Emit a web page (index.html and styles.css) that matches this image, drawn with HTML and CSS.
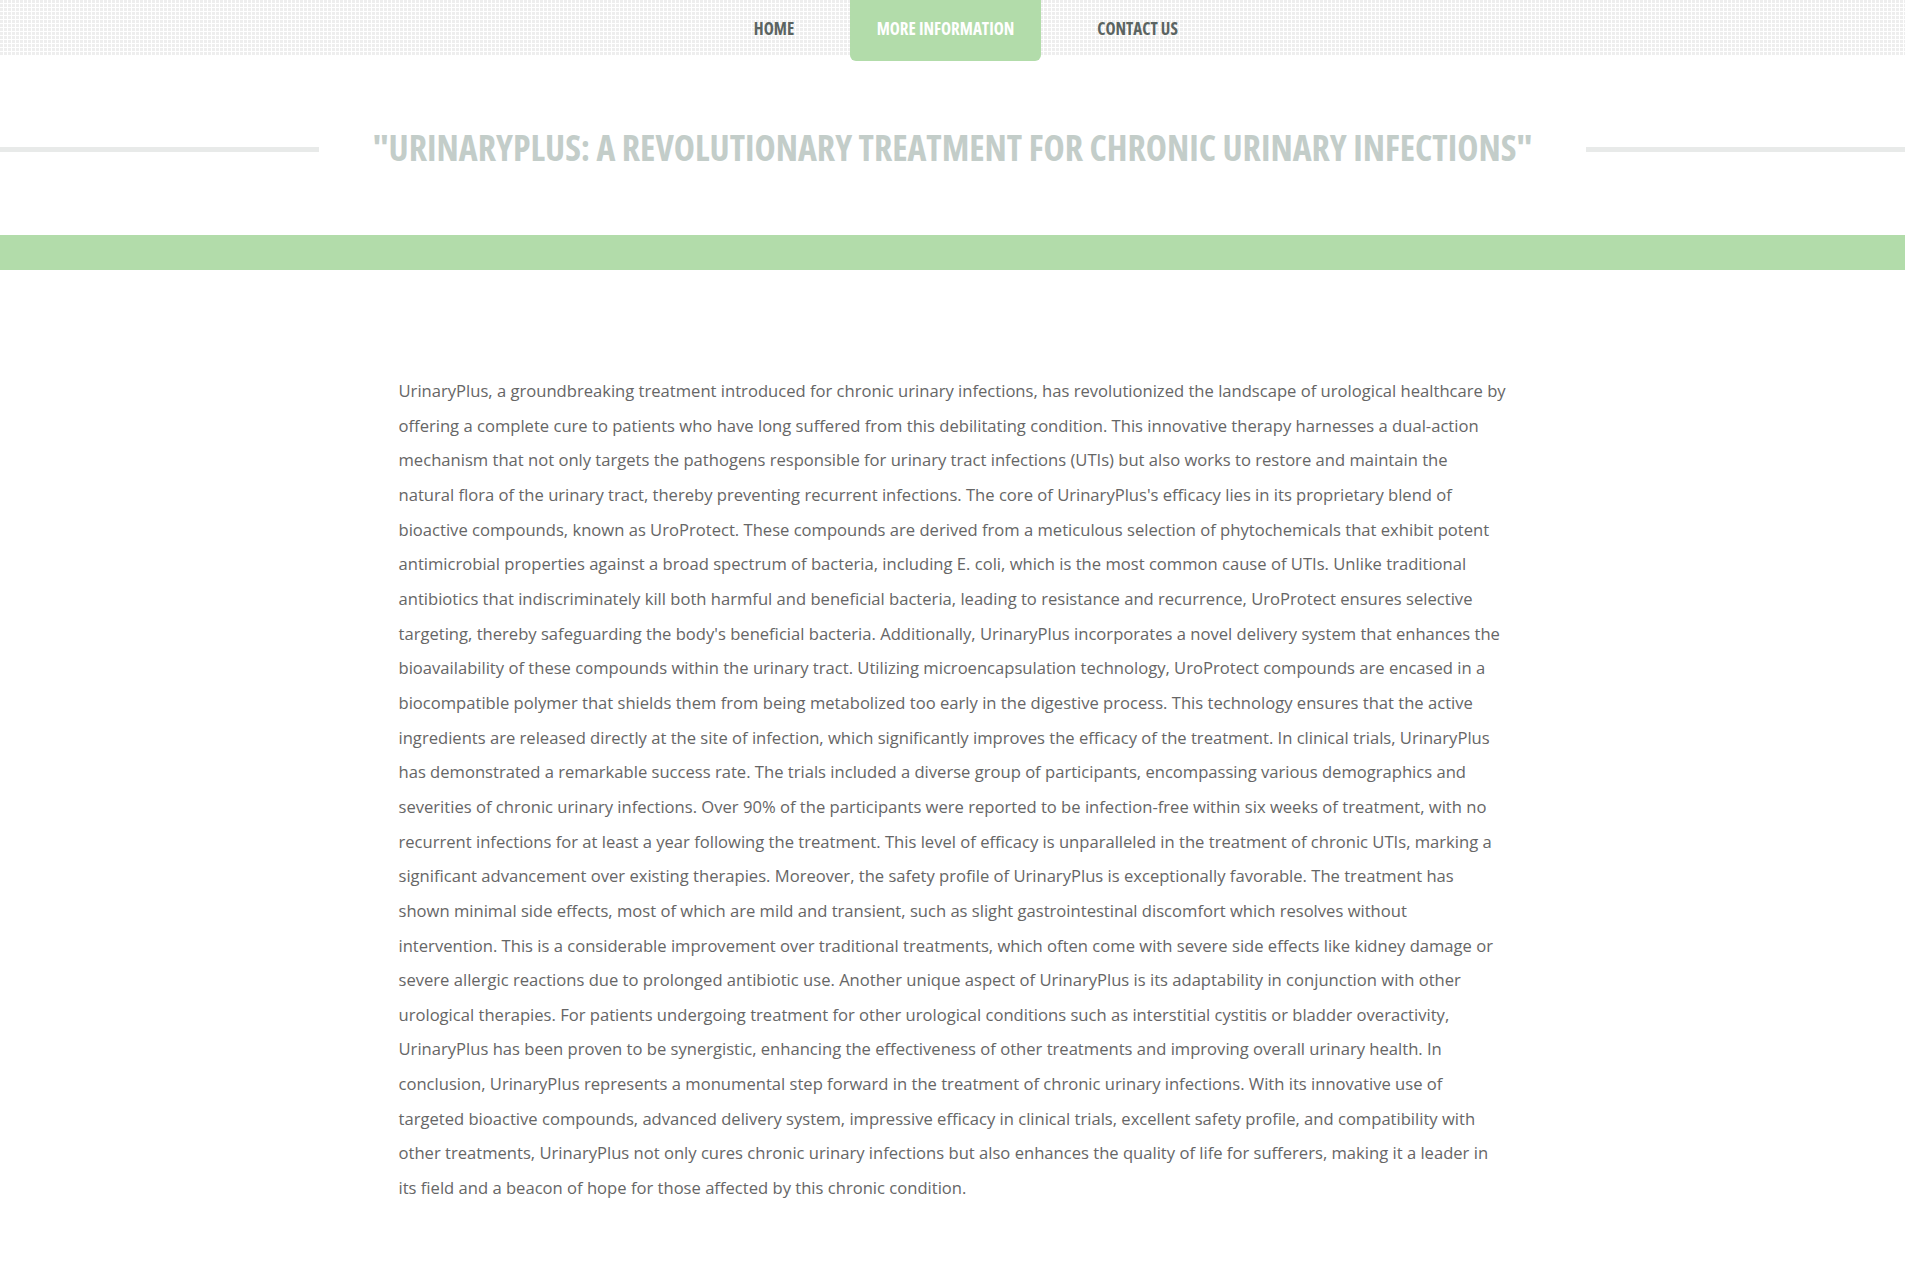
FILE: index.html
```html
<!DOCTYPE html>
<html lang="en">
<head>
<meta charset="utf-8">
<title>UrinaryPlus</title>
<link rel="stylesheet" href="styles.css">
</head>
<body>
<header class="topbar">
  <nav class="nav">
    <a class="nav-item nav-home" href="#">HOME</a>
    <a class="nav-item nav-more active" href="#">MORE INFORMATION</a>
    <a class="nav-item nav-contact" href="#">CONTACT US</a>
  </nav>
</header>
<section class="title-section">
  <div class="title-row">
    <span class="title-line"></span>
    <h1 class="title">"URINARYPLUS: A REVOLUTIONARY TREATMENT FOR CHRONIC URINARY INFECTIONS"</h1>
    <span class="title-line"></span>
  </div>
</section>
<div class="band"></div>
<main class="container">
  <p class="article">UrinaryPlus, a groundbreaking treatment introduced for chronic urinary infections, has revolutionized the landscape of urological healthcare by offering a complete cure to patients who have long suffered from this debilitating condition. This innovative therapy harnesses a dual-action mechanism that not only targets the pathogens responsible for urinary tract infections (UTIs) but also works to restore and maintain the natural flora of the urinary tract, thereby preventing recurrent infections. The core of UrinaryPlus's efficacy lies in its proprietary blend of bioactive compounds, known as UroProtect. These compounds are derived from a meticulous selection of phytochemicals that exhibit potent antimicrobial properties against a broad spectrum of bacteria, including E. coli, which is the most common cause of UTIs. Unlike traditional antibiotics that indiscriminately kill both harmful and beneficial bacteria, leading to resistance and recurrence, UroProtect ensures selective targeting, thereby safeguarding the body's beneficial bacteria. Additionally, UrinaryPlus incorporates a novel delivery system that enhances the bioavailability of these compounds within the urinary tract. Utilizing microencapsulation technology, UroProtect compounds are encased in a biocompatible polymer that shields them from being metabolized too early in the digestive process. This technology ensures that the active ingredients are released directly at the site of infection, which significantly improves the efficacy of the treatment. In clinical trials, UrinaryPlus has demonstrated a remarkable success rate. The trials included a diverse group of participants, encompassing various demographics and severities of chronic urinary infections. Over 90% of the participants were reported to be infection-free within six weeks of treatment, with no recurrent infections for at least a year following the treatment. This level of efficacy is unparalleled in the treatment of chronic UTIs, marking a significant advancement over existing therapies. Moreover, the safety profile of UrinaryPlus is exceptionally favorable. The treatment has shown minimal side effects, most of which are mild and transient, such as slight gastrointestinal discomfort which resolves without intervention. This is a considerable improvement over traditional treatments, which often come with severe side effects like kidney damage or severe allergic reactions due to prolonged antibiotic use. Another unique aspect of UrinaryPlus is its adaptability in conjunction with other urological therapies. For patients undergoing treatment for other urological conditions such as interstitial cystitis or bladder overactivity, UrinaryPlus has been proven to be synergistic, enhancing the effectiveness of other treatments and improving overall urinary health. In conclusion, UrinaryPlus represents a monumental step forward in the treatment of chronic urinary infections. With its innovative use of targeted bioactive compounds, advanced delivery system, impressive efficacy in clinical trials, excellent safety profile, and compatibility with other treatments, UrinaryPlus not only cures chronic urinary infections but also enhances the quality of life for sufferers, making it a leader in its field and a beacon of hope for those affected by this chronic condition.</p>
</main>
</body>
</html>
```

FILE: styles.css
```css
* { box-sizing: border-box; }
html, body { margin: 0; padding: 0; }
body {
  margin-right: 15px;
  background: #ffffff;
  font-family: "Open Sans", "Liberation Sans", sans-serif;
  color: #666666;
}
.topbar {
  height: 55px;
  background-color: #eeeeee;
  background-image:
    linear-gradient(to right, transparent 3px, #ffffff 3px),
    linear-gradient(to bottom, transparent 3px, #ffffff 3px);
  background-size: 4px 4px;
}
.nav {
  display: flex;
  justify-content: center;
  padding-left: 26px;
  height: 55px;
}
.nav-item {
  display: flex;
  align-items: center;
  justify-content: center;
  height: 55px;
  padding-top: 2px;
  font-family: "Open Sans", sans-serif;
  font-stretch: 75%;
  font-weight: 700;
  font-size: 17px;
  color: #5b6462;
  text-decoration: none;
  white-space: nowrap;
}
.nav-home { width: 94px; }
.nav-more { width: 191px; margin: 0 30px 0 29px; }
.nav-contact { width: 133px; }
.nav-item.active {
  height: 61px;
  padding-top: 2px;
  padding-bottom: 6px;
  background: #b2dcaa;
  color: #ffffff;
  border-radius: 0 0 6px 6px;
}
.title-section {
  padding: 69px 0 65px;
}
.title-row {
  display: flex;
  align-items: center;
}
.title-line {
  flex: 1;
  height: 5px;
  margin-top: 5px;
  background: #e8eae9;
}
.title {
  margin: 0 54px;
  font-family: "Open Sans", sans-serif;
  font-stretch: 75%;
  font-weight: 700;
  font-size: 35.8px;
  line-height: 46px;
  color: #c3cdc9;
  white-space: nowrap;
}
.band {
  height: 35px;
  background: #b2dcaa;
}
.container {
  width: 1140px;
  margin: 0 auto;
  padding: 104px 16px 115px;
}
.article {
  margin: 0;
  font-size: 16.6px;
  line-height: 34.66px;
  color: #666666;
}
```
